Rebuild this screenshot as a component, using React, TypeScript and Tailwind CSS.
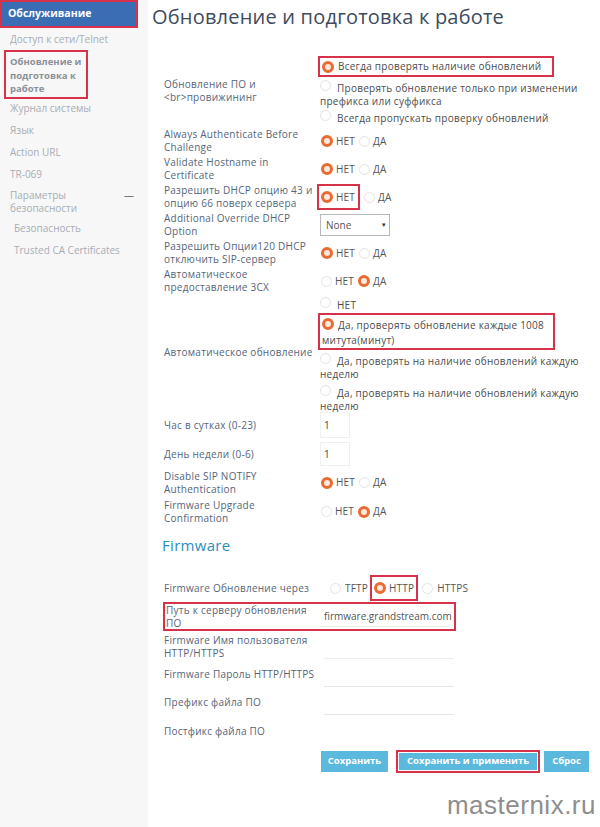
import React from 'react';

const font = { fontFamily: '"Open Sans", "Liberation Sans", sans-serif' };

function Radio({ checked = false }: { checked?: boolean }) {
  return checked ? (
    <span className="inline-block w-[12px] h-[12px] shrink-0 rounded-full border-[3px] border-[#e96b33] bg-[#fde8dc] align-[-1px]" />
  ) : (
    <span className="inline-block w-[11px] h-[11px] shrink-0 rounded-full border border-[#e4e4e4] bg-white align-[1px]" />
  );
}

function YesNo({ yes = false, boxed = false }: { yes?: boolean; boxed?: boolean }) {
  return (
    <div className="flex items-center text-[10px] text-[#555] tracking-[0.2px]">
      <span
        className={
          boxed
            ? 'flex items-center gap-[3px] h-[26px] pl-[2px] pr-[3px] border-2 border-[#d8324a] -ml-[3px]'
            : 'flex items-center gap-[3px] pl-[1px]'
        }
      >
        <Radio checked={!yes} />
        <span>НЕТ</span>
      </span>
      <span className="flex items-center gap-[3px] ml-[4px]">
        <Radio checked={yes} />
        <span>ДА</span>
      </span>
    </div>
  );
}

function Row({
  label,
  h,
  children,
  className = '',
}: {
  label: React.ReactNode;
  h: string;
  children?: React.ReactNode;
  className?: string;
}) {
  return (
    <div className={`flex items-center ${h} ${className}`}>
      <div className="w-[156px] shrink-0 text-[10px] leading-[13px] text-[#566579] tracking-[0.25px] whitespace-nowrap">
        {label}
      </div>
      <div className="flex-1">{children}</div>
    </div>
  );
}

function Two({ a, b }: { a: string; b: string }) {
  return (
    <>
      {a}
      <br />
      {b}
    </>
  );
}

const menu = ['Журнал системы', 'Язык', 'Action URL', 'TR-069'];

export default function App() {
  return (
    <div className="w-[600px] h-[827px] bg-white flex overflow-hidden relative" style={font}>
      {/* Sidebar */}
      <aside className="w-[148px] shrink-0 bg-[#f7f7f7] text-[10px] text-[#a7adb5]">
        <div className="h-[28px] border-2 border-[#d8324a] bg-[#3a6db3] w-[138px] flex items-center pl-[6px] text-white font-bold text-[10.5px]">
          Обслуживание
        </div>
        <div className="pl-[10px] h-[21px] mt-[1px] flex items-center">Доступ к сети/Telnet</div>
        <div className="ml-[4px] w-[84px] h-[49px] border-2 border-[#d8324a] px-[4px] pt-[3px] font-bold text-[9.5px] text-[#8b9199] leading-[13.5px]">
          Обновление и подготовка к работе
        </div>
        <div className="pl-[10px] flex flex-col -mt-[2px]">
          {menu.map((m) => (
            <div key={m} className="h-[22px] flex items-center">
              {m}
            </div>
          ))}
          <div className="flex justify-between items-start pr-[14px] pt-[4px] leading-[13px]">
            <span>
              Параметры
              <br />
              безопасности
            </span>
            <span className="text-[#777]">—</span>
          </div>
          <div className="pl-[4px] h-[26px] flex items-center">Безопасность</div>
          <div className="pl-[4px] h-[18px] flex items-center">Trusted CA Certificates</div>
        </div>
      </aside>

      {/* Main */}
      <main className="flex-1 pl-[4px]">
        <h1 className="text-[20px] leading-[28px] pt-[3px] text-[#3e4b5e] tracking-[0.2px]">
          Обновление и подготовка к работе
        </h1>

        <div className="ml-[12px] mt-[26px] w-[428px]">
          {/* update options */}
          <Row h="h-[68px]" label={<Two a="Обновление ПО и" b="<br>провижининг" />}>
            <div className="text-[10px] leading-[13px] text-[#4c4c4c] tracking-[0.25px] -mt-[1px]">
              <div className="flex items-center gap-[4px] h-[21px] w-[236px] -ml-[2px] pl-[2px] border-2 border-[#d8324a]">
                <Radio checked />
                <span>Всегда проверять наличие обновлений</span>
              </div>
              <div className="mt-[3px] pr-[2px]">
                <Radio />
                <span className="ml-[6px]">Проверять обновление только при изменении префикса или суффикса</span>
              </div>
              <div className="mt-[2px]">
                <Radio />
                <span className="ml-[6px]">Всегда пропускать проверку обновлений</span>
              </div>
            </div>
          </Row>

          <Row h="h-[28px]" className="mt-[2px]" label={<Two a="Always Authenticate Before" b="Challenge" />}>
            <YesNo />
          </Row>
          <Row h="h-[28px]" label={<Two a="Validate Hostname in" b="Certificate" />}>
            <YesNo />
          </Row>
          <Row h="h-[28px]" label={<Two a="Разрешить DHCP опцию 43 и" b="опцию 66 поверх сервера" />}>
            <YesNo boxed />
          </Row>
          <Row h="h-[28px]" label={<Two a="Additional Override DHCP" b="Option" />}>
            <div className="w-[70px] h-[22px] border border-[#b9b9b9] flex items-center justify-between pl-[5px] pr-[3px] text-[10px] text-[#555]">
              <span>None</span>
              <span className="text-[7px] text-[#333]">▾</span>
            </div>
          </Row>
          <Row h="h-[28px]" label={<Two a="Разрешить Опции120 DHCP" b="отключить SIP-сервер" />}>
            <YesNo />
          </Row>
          <Row h="h-[28px]" label={<Two a="Автоматическое" b="предоставление 3CX" />}>
            <YesNo yes />
          </Row>

          {/* auto update */}
          <Row h="h-[115px]" label="Автоматическое обновление">
            <div className="text-[10px] leading-[13px] text-[#4c4c4c] tracking-[0.25px] pt-[4px]">
              <div>
                <Radio />
                <span className="ml-[6px]">НЕТ</span>
              </div>
              <div className="mt-[1px] -ml-[2px] w-[237px] border-2 border-[#d8324a] leading-[15px] pt-[3px] pl-[2px] overflow-hidden whitespace-nowrap">
                <Radio checked />
                <span className="ml-[4px]">Да, проверять обновление каждые 1008</span>
                <br />
                <span>митута(минут)</span>
              </div>
              <div className="mt-[3px]">
                <Radio />
                <span className="ml-[6px]">Да, проверять на наличие обновлений каждую неделю</span>
              </div>
              <div className="mt-[4px]">
                <Radio />
                <span className="ml-[6px]">Да, проверять на наличие обновлений каждую неделю</span>
              </div>
            </div>
          </Row>

          <Row h="h-[30px]" label="Час в сутках (0-23)">
            <div className="w-[30px] h-[26px] border border-[#f0f0f0] flex items-center pl-[3px] text-[10px] text-[#444]">
              1
            </div>
          </Row>
          <Row h="h-[28px]" label="День недели (0-6)">
            <div className="w-[30px] h-[24px] border border-[#f0f0f0] flex items-center pl-[3px] text-[10px] text-[#444]">
              1
            </div>
          </Row>
          <Row h="h-[29px]" label={<Two a="Disable SIP NOTIFY" b="Authentication" />}>
            <YesNo />
          </Row>
          <Row h="h-[29px]" label={<Two a="Firmware Upgrade" b="Confirmation" />}>
            <YesNo yes />
          </Row>

          <h2 className="text-[15px] leading-[20px] mt-[9px] -ml-[2px] text-[#2b8cc4] tracking-[0.3px]">Firmware</h2>

          <Row h="h-[26px]" className="mt-[20px]" label="Firmware Обновление через">
            <div className="flex items-center text-[10px] text-[#555] tracking-[0.2px]">
              <span className="flex items-center gap-[4px] ml-[10px]">
                <Radio />
                <span>TFTP</span>
              </span>
              <span className="flex items-center gap-[3px] ml-[2px] h-[26px] px-[2px] border-2 border-[#d8324a]">
                <Radio checked />
                <span>HTTP</span>
              </span>
              <span className="flex items-center gap-[4px] ml-[4px]">
                <Radio />
                <span>HTTPS</span>
              </span>
            </div>
          </Row>
          <div className="flex items-center h-[29px] w-[293px] mt-[1px] -ml-[1px] border-2 border-[#d8324a]">
            <div className="w-[153px] shrink-0 text-[10px] leading-[13px] text-[#566579] tracking-[0.25px] pl-[1px] whitespace-nowrap">
              <Two a="Путь к серверу обновления" b="ПО" />
            </div>
            <div className="w-[130px] h-[20px] ml-[2px] flex items-center pl-[4px] text-[10px] text-[#555] border-b border-[#eeeeee]">
              firmware.grandstream.com
            </div>
          </div>
          <Row h="h-[29px]" className="mt-[1px]" label={<Two a="Firmware Имя пользователя" b="HTTP/HTTPS" />}>
            <div className="w-[130px] h-[24px] ml-[4px] border-b border-[#eeeeee]" />
          </Row>
          <Row h="h-[27px]" label="Firmware Пароль HTTP/HTTPS">
            <div className="w-[130px] h-[24px] ml-[4px] border-b border-[#e6e6e6]" />
          </Row>
          <Row h="h-[29px]" label="Префикс файла ПО">
            <div className="w-[130px] h-[24px] ml-[4px] border-b border-[#e6e6e6]" />
          </Row>
          <Row h="h-[29px]" label="Постфикс файла ПО" />

          <div className="flex items-center mt-[4px] ml-[157px] text-[9.5px] font-bold text-white whitespace-nowrap">
            <button className="h-[21px] w-[67px] bg-[#5bb9de]">Сохранить</button>
            <span className="border-2 border-[#d8324a] p-[1px] ml-[8px]">
              <button className="h-[17px] w-[138px] bg-[#5bb9de] block">Сохранить и применить</button>
            </span>
            <button className="h-[21px] w-[45px] ml-[4px] bg-[#5bb9de]">Сброс</button>
          </div>
        </div>
      </main>

      <div
        className="absolute right-[4px] bottom-[2px] text-[26px] text-[#8e8e8e] tracking-[0.5px]"
        style={{ fontFamily: '"Liberation Sans", Arial, sans-serif' }}
      >
        masternix.ru
      </div>
    </div>
  );
}
